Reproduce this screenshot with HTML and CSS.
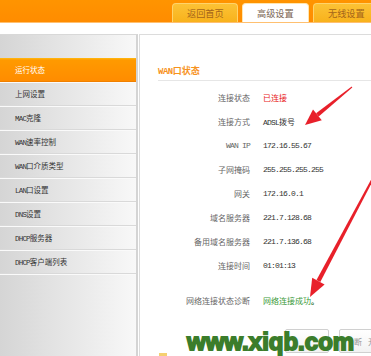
FILE: index.html
```html
<!DOCTYPE html>
<html lang="zh-CN">
<head>
    <meta charset="UTF-8">
    <title>运行状态</title>
    <link rel="stylesheet" href="styles.css">
</head>
<body>

    <div class="top">
        <a class="tab">返回首页</a>
        <a class="tab on">高级设置</a>
        <a class="tab">无线设置</a>
    </div>

    <div class="main">
        <div class="side">
            <div class="side-head"></div>
            <ul class="menu">
                <li class="on">运行状态</li>
                <li>上网设置</li>
                <li><span class="en">MAC</span>克隆</li>
                <li><span class="en">WAN</span>速率控制</li>
                <li><span class="en">WAN</span>口介质类型</li>
                <li><span class="en">LAN</span>口设置</li>
                <li><span class="en">DNS</span>设置</li>
                <li><span class="en">DHCP</span>服务器</li>
                <li><span class="en">DHCP</span>客户端列表</li>
            </ul>
        </div>

        <div class="panel">
            <h2 class="title"><span class="en">WAN</span>口状态</h2>
            <div class="info">
                <div class="row"><span class="label">连接状态</span><span class="val red">已连接</span></div>
                <div class="row"><span class="label">连接方式</span><span class="val"><span class="en">ADSL</span>拨号</span></div>
                <div class="row"><span class="label en">WAN IP</span><span class="val en">172.16.55.67</span></div>
                <div class="row"><span class="label">子网掩码</span><span class="val en">255.255.255.255</span></div>
                <div class="row"><span class="label">网关</span><span class="val en">172.16.0.1</span></div>
                <div class="row"><span class="label">域名服务器</span><span class="val en">221.7.128.68</span></div>
                <div class="row"><span class="label">备用域名服务器</span><span class="val en">221.7.136.68</span></div>
                <div class="row"><span class="label">连接时间</span><span class="val en">01:01:13</span></div>
                <div class="row diag"><span class="label">网络连接状态诊断</span><span class="val green">网络连接成功<b>。</b></span></div>
            </div>
            <div class="btns">
                <button class="btn"></button>
                <button class="btn wide">断开</button>
            </div>
            <div class="help"></div>
        </div>
    </div>

    <!-- 水印和标注箭头 -->
    <div class="mark">www.xiqb.com</div>
    <svg class="arrows" width="371" height="356" viewBox="0 0 371 356">
        <polygon points="352.3,87.4 351.7,86.6 316.1,113.3 318.7,116.5" />
        <polygon points="305,125 321.8,120.3 313,109.5" />
        <polygon points="372.9,180.5 371.1,179.5 316.5,280.1 320.3,282.1" />
        <polygon points="310,297 324.6,284.4 312.2,277.8" />
    </svg>

</body>
</html>
```

FILE: styles.css
```css
body {
    margin: 0;
    width: 371px;
    height: 356px;
    overflow: hidden;
    display: flex;
    flex-direction: column;
    position: relative;
    font-family: "Noto Sans CJK SC", sans-serif;
    font-size: 8px;
    color: #333;
    background: #fff;
}

.en {
    font-family: "Liberation Mono", monospace;
    letter-spacing: -0.8px;
}

/* 顶部导航 */
.top {
    height: 23px;
    box-sizing: border-box;
    padding: 3px 0 0 172px;
    display: flex;
    gap: 4px;
    background: linear-gradient(#ff9400, #ff8c00);
    border-bottom: 1px solid #ffc070;
    flex-shrink: 0;
}

.tab {
    width: 66px;
    flex-shrink: 0;
    box-sizing: border-box;
    height: 19px;
    line-height: 19px;
    padding-left: 14px;
    font-size: 9.2px;
    color: #a5651a;
    background: linear-gradient(#fcc235, #f8b21c);
    border: 1px solid #ffd36a;
    border-bottom: none;
    border-radius: 4px 4px 0 0;
}

.tab.on {
    width: 67px;
    background: #fff;
    border-color: #ffe6b0;
    color: #7a6552;
}

/* 主体 */
.main {
    flex: 1;
    display: flex;
    gap: 1px;
    margin-top: 11px;
}

.side {
    width: 138px;
    flex-shrink: 0;
    box-sizing: border-box;
    border-top: 1px solid #d8d8d8;
    border-right: 2px solid #d4d4d4;
    background: linear-gradient(to right, #d5d5d5, #f8f8f8);
}

.side-head {
    height: 23px;
}

.menu {
    list-style: none;
    margin: 0;
    padding: 0;
}

.menu li {
    height: 23px;
    line-height: 23px;
    padding-left: 15px;
    font-size: 7.5px;
    color: #333;
    border-bottom: 1px solid #d9d9d9;
    box-shadow: 0 1px 0 #fafafa;
}

.menu li.on {
    color: #fff;
    background: linear-gradient(#ffbb10 0, #ff9a00 2px, #ff8c00 100%);
    border-bottom-color: #f08000;
}

.panel {
    flex: 1;
    border-top: 1px solid #dcdcdc;
    border-left: 1px solid #dcdcdc;
    background: #fff;
}

.title {
    margin: 30px 0 0 18px;
    padding-bottom: 3px;
    height: 12px;
    line-height: 12px;
    font-size: 9px;
    font-weight: bold;
    color: #f7931e;
    border-bottom: 1px solid #e6e6e6;
}

.title .en {
    letter-spacing: -0.5px;
}

.info {
    margin-top: 5px;
}

.row {
    display: flex;
    height: 24px;
    line-height: 24px;
}

.row.diag {
    margin-top: 11px;
}

.label {
    width: 110px;
    margin-right: 13px;
    text-align: right;
    color: #666;
}

.val {
    color: #333;
}

.red {
    color: #e81818;
}

.green {
    color: #3a9a3a;
}

.green b {
    color: #1d6b1d;
}

.btns {
    margin: 16px 0 0 145px;
    display: flex;
    gap: 10px;
}

.btn {
    width: 44px;
    height: 24px;
    padding: 0;
    font-family: "Noto Sans CJK SC", sans-serif;
    font-size: 8px;
    color: #999;
    background: linear-gradient(#fff, #f2f2f2);
    border: 1px solid #d0d0d0;
    border-radius: 2px;
}

.btn.wide {
    width: 50px;
    padding-left: 14px;
    text-align: left;
    letter-spacing: 6px;
    flex-shrink: 0;
}

.help {
    margin-left: 19px;
    width: 8px;
    height: 6px;
    background: #f5d070;
}

/* 水印 */
.mark {
    position: absolute;
    left: 187px;
    top: 329px;
    line-height: 25px;
    font-family: "Liberation Sans", sans-serif;
    font-size: 24px;
    font-weight: bold;
    color: #3b7d2b;
    -webkit-text-stroke: 1.8px #3b7d2b;
}

.arrows {
    position: absolute;
    left: 0;
    top: 0;
    fill: #e8202a;
    pointer-events: none;
}
```
